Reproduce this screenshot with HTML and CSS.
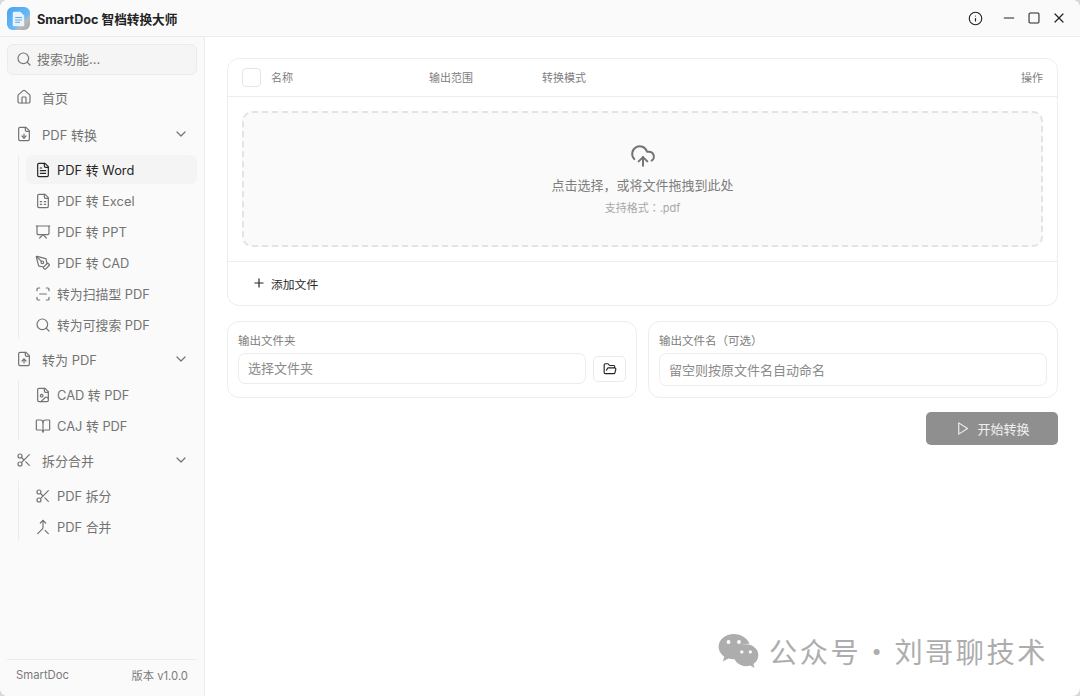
FILE: index.html
```html
<!DOCTYPE html>
<html lang="zh-CN">
<head>
<meta charset="utf-8">
<title>SmartDoc 智档转换大师</title>
<link rel="stylesheet" href="styles.css">
</head>
<body>
<svg class="defs" width="0" height="0" aria-hidden="true">
  <symbol id="i-search" viewBox="0 0 24 24"><circle cx="11" cy="11" r="8"/><path d="m21 21-4.3-4.3"/></symbol>
  <symbol id="i-home" viewBox="0 0 24 24"><path d="M15 21v-8a1 1 0 0 0-1-1h-4a1 1 0 0 0-1 1v8"/><path d="M3 10a2 2 0 0 1 .709-1.528l7-5.999a2 2 0 0 1 2.582 0l7 5.999A2 2 0 0 1 21 10v9a2 2 0 0 1-2 2H5a2 2 0 0 1-2-2z"/></symbol>
  <symbol id="i-file-down" viewBox="0 0 24 24"><path d="M15 2H6a2 2 0 0 0-2 2v16a2 2 0 0 0 2 2h12a2 2 0 0 0 2-2V7Z"/><path d="M14 2v4a2 2 0 0 0 2 2h4"/><path d="M12 18v-6"/><path d="m9 15 3 3 3-3"/></symbol>
  <symbol id="i-file-up" viewBox="0 0 24 24"><path d="M15 2H6a2 2 0 0 0-2 2v16a2 2 0 0 0 2 2h12a2 2 0 0 0 2-2V7Z"/><path d="M14 2v4a2 2 0 0 0 2 2h4"/><path d="M12 12v6"/><path d="m15 15-3-3-3 3"/></symbol>
  <symbol id="i-file-text" viewBox="0 0 24 24"><path d="M15 2H6a2 2 0 0 0-2 2v16a2 2 0 0 0 2 2h12a2 2 0 0 0 2-2V7Z"/><path d="M14 2v4a2 2 0 0 0 2 2h4"/><path d="M10 9H8"/><path d="M16 13H8"/><path d="M16 17H8"/></symbol>
  <symbol id="i-file-sheet" viewBox="0 0 24 24"><path d="M15 2H6a2 2 0 0 0-2 2v16a2 2 0 0 0 2 2h12a2 2 0 0 0 2-2V7Z"/><path d="M14 2v4a2 2 0 0 0 2 2h4"/><path d="M8 13h2"/><path d="M14 13h2"/><path d="M8 17h2"/><path d="M14 17h2"/></symbol>
  <symbol id="i-present" viewBox="0 0 24 24"><path d="M2 3h20"/><path d="M21 3v11a2 2 0 0 1-2 2H5a2 2 0 0 1-2-2V3"/><path d="m7 21 5-5 5 5"/></symbol>
  <symbol id="i-pen" viewBox="0 0 24 24"><path d="M15.707 21.293a1 1 0 0 1-1.414 0l-1.586-1.586a1 1 0 0 1 0-1.414l5.586-5.586a1 1 0 0 1 1.414 0l1.586 1.586a1 1 0 0 1 0 1.414z"/><path d="m18 13-1.375-6.874a1 1 0 0 0-.746-.776L3.235 2.028a1 1 0 0 0-1.207 1.207L5.35 15.879a1 1 0 0 0 .776.746L13 18"/><path d="m2.3 2.3 7.286 7.286"/><circle cx="11" cy="11" r="2"/></symbol>
  <symbol id="i-scan" viewBox="0 0 24 24"><path d="M3 7V5a2 2 0 0 1 2-2h2"/><path d="M17 3h2a2 2 0 0 1 2 2v2"/><path d="M21 17v2a2 2 0 0 1-2 2h-2"/><path d="M7 21H5a2 2 0 0 1-2-2v-2"/><path d="M7 12h10"/></symbol>
  <symbol id="i-file-image" viewBox="0 0 24 24"><path d="M15 2H6a2 2 0 0 0-2 2v16a2 2 0 0 0 2 2h12a2 2 0 0 0 2-2V7Z"/><path d="M14 2v4a2 2 0 0 0 2 2h4"/><circle cx="10" cy="13" r="2"/><path d="m20 17-1.3-1.3a2.4 2.4 0 0 0-3.4 0L9 22"/></symbol>
  <symbol id="i-book" viewBox="0 0 24 24"><path d="M12 7v14"/><path d="M3 18a1 1 0 0 1-1-1V4a1 1 0 0 1 1-1h5a4 4 0 0 1 4 4 4 4 0 0 1 4-4h5a1 1 0 0 1 1 1v13a1 1 0 0 1-1 1h-6a3 3 0 0 0-3 3 3 3 0 0 0-3-3z"/></symbol>
  <symbol id="i-scissors" viewBox="0 0 24 24"><circle cx="6" cy="6" r="3"/><path d="M8.12 8.12 12 12"/><path d="M20 4 8.12 15.88"/><circle cx="6" cy="18" r="3"/><path d="M14.8 14.8 20 20"/></symbol>
  <symbol id="i-merge" viewBox="0 0 24 24"><path d="m8 6 4-4 4 4"/><path d="M12 2v10.3a4 4 0 0 1-1.172 2.872L4 22"/><path d="m20 22-5-5"/></symbol>
  <symbol id="i-chevron" viewBox="0 0 24 24"><path d="m6 9 6 6 6-6"/></symbol>
  <symbol id="i-cloud" viewBox="0 0 24 24"><path d="M12 13v8"/><path d="M4 14.899A7 7 0 1 1 15.71 8h1.79a4.5 4.5 0 0 1 2.5 8.242"/><path d="m8 17 4-4 4 4"/></symbol>
  <symbol id="i-plus" viewBox="0 0 24 24"><path d="M5 12h14"/><path d="M12 5v14"/></symbol>
  <symbol id="i-folder" viewBox="0 0 24 24"><path d="m6 14 1.5-2.9A2 2 0 0 1 9.24 10H20a2 2 0 0 1 1.94 2.5l-1.54 6a2 2 0 0 1-1.95 1.5H4a2 2 0 0 1-2-2V5a2 2 0 0 1 2-2h3.9a2 2 0 0 1 1.69.9l.81 1.2a2 2 0 0 0 1.69.9H18a2 2 0 0 1 2 2v2"/></symbol>
  <symbol id="i-play" viewBox="0 0 24 24"><path d="M6 3 20 12 6 21Z"/></symbol>
  <symbol id="i-info" viewBox="0 0 24 24"><circle cx="12" cy="12" r="10"/><path d="M12 16v-4"/><path d="M12 8h.01"/></symbol>
  <symbol id="i-minus" viewBox="0 0 24 24"><path d="M4 12h16"/></symbol>
  <symbol id="i-square" viewBox="0 0 24 24"><rect x="3.5" y="3.5" width="17" height="17" rx="2"/></symbol>
  <symbol id="i-x" viewBox="0 0 24 24"><path d="M18 6 6 18"/><path d="m6 6 12 12"/></symbol>
</svg>

<div class="window">
  <header class="titlebar">
    <div class="brand">
      <svg class="logo" viewBox="0 0 24 24">
        <defs><linearGradient id="lg" x1="0" y1="0" x2="1" y2="1"><stop offset="0" stop-color="#4aa3f0"/><stop offset="0.62" stop-color="#67baf5"/><stop offset="0.72" stop-color="#b9b9b9"/><stop offset="1" stop-color="#a8a8a8"/></linearGradient></defs>
        <rect width="24" height="24" rx="6" fill="url(#lg)"/>
        <path d="M7 5h7l4 4v10a1 1 0 0 1-1 1H7a1 1 0 0 1-1-1V6a1 1 0 0 1 1-1z" fill="#e8f3fd"/>
        <path d="M8.500 11h7M8.500 13.500h7M8.500 16h5" stroke="#5aa9ea" stroke-width="1.100" fill="none"/>
      </svg>
      <span class="brand-name">SmartDoc 智档转换大师</span>
    </div>
    <div class="win-controls">
      <svg class="ic win-info"><use href="#i-info"/></svg>
      <svg class="ic win-min"><use href="#i-minus"/></svg>
      <svg class="ic win-max"><use href="#i-square"/></svg>
      <svg class="ic win-close"><use href="#i-x"/></svg>
    </div>
  </header>

  <div class="body">
    <aside class="sidebar">
      <div class="search"><svg class="ic"><use href="#i-search"/></svg><span>搜索功能...</span></div>

      <nav class="nav">
        <div class="nav-head"><svg class="ic"><use href="#i-home"/></svg><span>首页</span></div>

        <div class="nav-head"><svg class="ic"><use href="#i-file-down"/></svg><span>PDF 转换</span><svg class="ic chev"><use href="#i-chevron"/></svg></div>
        <div class="sub">
          <div class="sub-item active"><svg class="ic"><use href="#i-file-text"/></svg><span>PDF 转 Word</span></div>
          <div class="sub-item"><svg class="ic"><use href="#i-file-sheet"/></svg><span>PDF 转 Excel</span></div>
          <div class="sub-item"><svg class="ic"><use href="#i-present"/></svg><span>PDF 转 PPT</span></div>
          <div class="sub-item"><svg class="ic"><use href="#i-pen"/></svg><span>PDF 转 CAD</span></div>
          <div class="sub-item"><svg class="ic"><use href="#i-scan"/></svg><span>转为扫描型 PDF</span></div>
          <div class="sub-item"><svg class="ic"><use href="#i-search"/></svg><span>转为可搜索 PDF</span></div>
        </div>

        <div class="nav-head"><svg class="ic"><use href="#i-file-up"/></svg><span>转为 PDF</span><svg class="ic chev"><use href="#i-chevron"/></svg></div>
        <div class="sub">
          <div class="sub-item"><svg class="ic"><use href="#i-file-image"/></svg><span>CAD 转 PDF</span></div>
          <div class="sub-item"><svg class="ic"><use href="#i-book"/></svg><span>CAJ 转 PDF</span></div>
        </div>

        <div class="nav-head"><svg class="ic"><use href="#i-scissors"/></svg><span>拆分合并</span><svg class="ic chev"><use href="#i-chevron"/></svg></div>
        <div class="sub">
          <div class="sub-item"><svg class="ic"><use href="#i-scissors"/></svg><span>PDF 拆分</span></div>
          <div class="sub-item"><svg class="ic"><use href="#i-merge"/></svg><span>PDF 合并</span></div>
        </div>
      </nav>

      <footer class="side-foot"><span>SmartDoc</span><span>版本 v1.0.0</span></footer>
    </aside>

    <main class="main">
      <section class="card files">
        <div class="files-head">
          <span class="checkbox"></span>
          <span class="col col-name">名称</span>
          <span class="col col-range">输出范围</span>
          <span class="col col-mode">转换模式</span>
          <span class="col col-op">操作</span>
        </div>
        <div class="files-body">
          <div class="drop">
            <svg class="ic drop-icon"><use href="#i-cloud"/></svg>
            <div class="drop-title">点击选择，或将文件拖拽到此处</div>
            <div class="drop-hint">支持格式<span class="punct" lang="zh-TW">：</span>.pdf</div>
          </div>
        </div>
        <div class="files-foot"><svg class="ic"><use href="#i-plus"/></svg><span>添加文件</span></div>
      </section>

      <div class="outputs">
        <section class="card field">
          <div class="field-label">输出文件夹</div>
          <div class="field-row">
            <div class="input grow"><span class="input-text">选择文件夹</span></div>
            <div class="folder-btn"><svg class="ic"><use href="#i-folder"/></svg></div>
          </div>
        </section>
        <section class="card field">
          <div class="field-label">输出文件名<span class="punct" lang="zh-TW">（</span>可选<span class="punct" lang="zh-TW">）</span></div>
          <div class="input tall"><span class="input-text tight">留空则按原文件名自动命名</span></div>
        </section>
      </div>

      <div class="actions">
        <div class="start"><svg class="ic"><use href="#i-play"/></svg><span>开始转换</span></div>
      </div>
    </main>
  </div>

  <div class="watermark">
    <svg class="wechat" viewBox="0 0 44 38">
      <path d="M17 1C8 1 1 7 1 14.500c0 4.300 2.300 8 6 10.500l-1.500 5 5.800-3c1.800.5 3.700.8 5.700.8.600 0 1 0 1.500-.1-.4-1.300-.6-2.500-.6-3.800 0-7 6.500-12.500 14.500-12.500h1.300C31.700 5.800 25 1 17 1z" fill="#adadad"/>
      <path d="M43 23.500C43 17 36.800 12 30 12s-13 5-13 11.500S23.200 35 30 35c1.500 0 3-.2 4.300-.7l4.700 2.700-1.300-4.200c3.200-2.200 5.300-5.500 5.300-9.500z" fill="#adadad"/>
      <circle cx="11.500" cy="9.500" r="2" fill="#fff"/><circle cx="22.500" cy="9.500" r="2" fill="#fff"/>
      <circle cx="25.500" cy="20" r="1.700" fill="#fff"/><circle cx="34.500" cy="20" r="1.700" fill="#fff"/>
    </svg>
    <span>公众号 · 刘哥聊技术</span>
  </div>
</div>
</body>
</html>
```

FILE: styles.css
```css
* { box-sizing: border-box; }
html, body { margin: 0; height: 100%; }
body {
  background: #d8d8d8;
  font-family: Inter, "Noto Sans CJK SC", "Noto Sans", sans-serif;
  color: #737373;
  overflow: hidden;
}
.defs { position: absolute; }
.ic {
  width: 16px;
  height: 16px;
  flex: none;
  fill: none;
  stroke: currentColor;
  stroke-width: 1.800;
  stroke-linecap: round;
  stroke-linejoin: round;
}
.punct { font-family: "Noto Sans CJK TC", sans-serif; line-height: 1; }
.window {
  position: relative;
  width: 1080px;
  height: 696px;
  background: #fff;
  border-radius: 8px;
  overflow: hidden;
  display: flex;
  flex-direction: column;
}

/* title bar */
.titlebar {
  height: 37px;
  flex: none;
  display: flex;
  align-items: center;
  justify-content: space-between;
  background: #fafafa;
  border-bottom: 1px solid #ececec;
  padding: 0 13px 0 7px;
}
.brand { display: flex; align-items: center; gap: 7px; }
.logo { width: 23px; height: 23px; flex: none; }
.brand-name { font-size: 12.650px; font-weight: 700; color: #222; }
.win-controls { display: flex; align-items: center; color: #222; }
.win-info { width: 15px; height: 15px; margin-right: 18.500px; }
.win-min { width: 14px; height: 14px; margin-right: 11.500px; stroke-width: 2; }
.win-max { width: 14px; height: 14px; margin-right: 10px; }
.win-close { width: 16px; height: 16px; }

.body { flex: 1; display: flex; min-height: 0; }

/* sidebar */
.sidebar {
  width: 205px;
  flex: none;
  background: #fafafa;
  border-right: 1px solid #ececec;
  padding: 7px 7px 0;
  display: flex;
  flex-direction: column;
}
.search {
  height: 31px;
  flex: none;
  display: flex;
  align-items: center;
  gap: 5px;
  padding: 0 0 2px 8px;
  background: #f5f5f5;
  border: 1px solid #ebebeb;
  border-radius: 6px;
  font-size: 13px;
  color: #777;
}
.nav { flex: 1; margin-top: 5px; }
.nav-head {
  height: 36px;
  display: flex;
  align-items: center;
  gap: 10px;
  padding: 0 8px 2px 9px;
  font-size: 13px;
  color: #737373;
  margin-bottom: 1px;
}
.nav-head .chev { margin-left: auto; }
.sub {
  margin: 2px 0 3px 11px;
  border-left: 1px solid #ececec;
  padding-left: 7px;
  display: flex;
  flex-direction: column;
  gap: 2px;
}
.sub-item {
  height: 29px;
  display: flex;
  align-items: center;
  gap: 6px;
  padding-left: 9px;
  border-radius: 6px;
  font-size: 12.850px;
  color: #737373;
}
.sub-item.active { background: #f4f4f4; color: #262626; }
.side-foot {
  height: 37px;
  flex: none;
  display: flex;
  align-items: center;
  justify-content: space-between;
  padding: 0 9px 6px;
  border-top: 1px solid #ececec;
  font-size: 11.300px;
  color: #7a7a7a;
}

/* main */
.main { flex: 1; padding: 21px 22px 0; min-width: 0; }
.card {
  background: #fff;
  border: 1px solid #ededed;
  border-radius: 12px;
}
.files-head {
  height: 38px;
  display: flex;
  align-items: center;
  padding: 0 14px;
  border-bottom: 1px solid #ededed;
}
.checkbox {
  width: 19px;
  height: 19px;
  flex: none;
  border: 1px solid #e5e5e5;
  border-radius: 4px;
  background: #fff;
}
.col { font-size: 11px; line-height: 16px; color: #808080; }
.col-name { margin-left: 10px; width: 158px; }
.col-range { width: 113px; }
.col-op { margin-left: auto; }
.files-body { padding: 14px 14px; border-bottom: 1px solid #ededed; }
.drop {
  height: 136px;
  border: 2px dashed #e3e3e3;
  border-radius: 10px;
  background: #fafafa;
  display: flex;
  flex-direction: column;
  align-items: center;
  padding-top: 30px;
}
.drop-icon { width: 26px; height: 26px; color: #737373; }
.drop-title { margin-top: 6px; font-size: 13px; line-height: 20px; color: #7d7d7d; }
.drop-hint { margin-top: 5px; font-size: 11px; line-height: 16px; color: #a8a8a8; }
.files-foot {
  height: 43px;
  display: flex;
  align-items: center;
  gap: 5px;
  padding: 0 0 1px 24px;
  font-size: 11.800px;
  color: #262626;
}
.files-foot .ic { width: 14px; height: 14px; stroke-width: 2; }

.outputs { display: flex; gap: 11px; margin-top: 15px; }
.field { flex: 1; height: 77px; padding: 11px 10px 0; min-width: 0; }
.field-label { font-size: 11.500px; height: 17px; line-height: 17px; color: #7d7d7d; margin-bottom: 3px; }
.field-row { display: flex; align-items: center; gap: 7px; }
.input {
  height: 31px;
  display: flex;
  align-items: center;
  padding-left: 9px;
  background: #fff;
  border: 1px solid #ededed;
  border-radius: 7px;
  font-size: 13px;
  color: #8a8a8a;
}
.input-text { margin-bottom: 2px; }
.input-text.tight { margin-bottom: 1px; }
.input.tall { height: 33px; }
.grow { flex: 1; }
.folder-btn {
  width: 33px;
  height: 26px;
  flex: none;
  display: flex;
  align-items: center;
  justify-content: center;
  border: 1px solid #ebebeb;
  border-radius: 5px;
  color: #222;
}
.folder-btn .ic { width: 14px; height: 14px; stroke-width: 2; }

.actions { display: flex; justify-content: flex-end; margin-top: 14px; }
.start {
  width: 132px;
  height: 33px;
  display: flex;
  align-items: center;
  justify-content: center;
  gap: 7px;
  padding: 0 0 1px 1px;
  background: #8f8f8f;
  border-radius: 5px;
  color: #f0f0f0;
  font-size: 13px;
}
.start .ic { width: 15px; height: 15px; }

/* watermark over the page */
.watermark {
  position: absolute;
  left: 717px;
  top: 632px;
  display: flex;
  align-items: center;
  gap: 9px;
  color: #adadad;
  font-family: "Noto Sans CJK SC", sans-serif;
  font-size: 28.200px;
  letter-spacing: 2.500px;
  word-spacing: -7.500px;
  line-height: 38px;
  white-space: nowrap;
}
.wechat { width: 43px; height: 36px; flex: none; }
```
